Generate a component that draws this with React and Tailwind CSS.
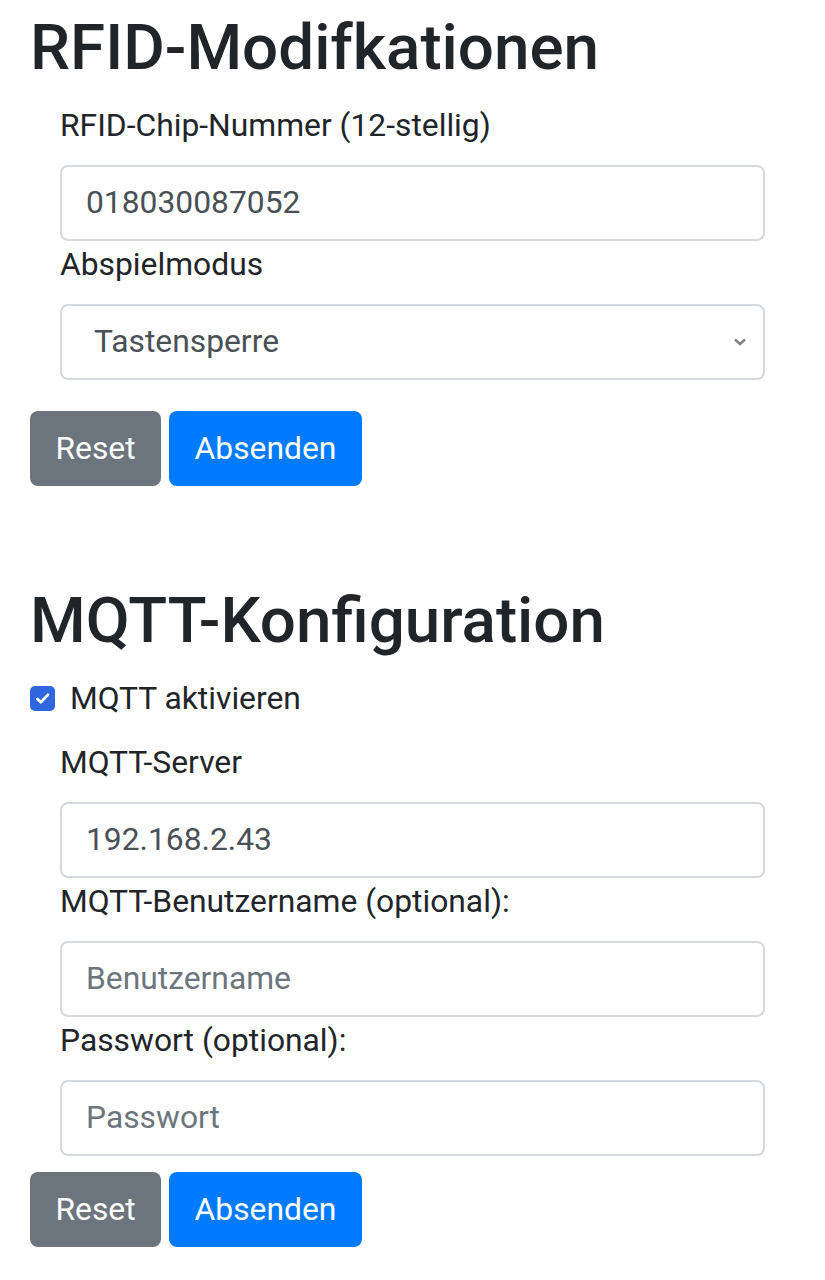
const FONT = { fontFamily: 'Roboto, "Noto Sans", sans-serif' }

function Field({ label, value, placeholder }) {
  return (
    <div>
      <label className="block h-[47px] leading-[47px] mb-[16px] text-[31.8px] text-[#212529]">{label}</label>
      <div className="h-[76px] border-2 border-[#d5d9de] rounded-[8px] bg-white px-[24px] flex items-center text-[31.8px]">
        {value ? (
          <span className="text-[#495057]">{value}</span>
        ) : (
          <span className="text-[#6c757d]">{placeholder}</span>
        )}
      </div>
    </div>
  )
}

function Buttons() {
  return (
    <div className="flex gap-[8px] text-[31.8px] text-white">
      <button className="h-[75px] w-[131px] rounded-[8px] bg-[#6c757d]">Reset</button>
      <button className="h-[75px] w-[193px] rounded-[8px] bg-[#007bff]">Absenden</button>
    </div>
  )
}

export default function App() {
  return (
    <div className="bg-white w-[825px] h-[1280px] px-[30px]" style={FONT}>
      {/* RFID */}
      <h2 className="pt-[10px] h-[86px] leading-[76px] text-[63.7px] font-medium text-[#212529]">RFID-Modifkationen</h2>
      <div className="px-[30px] pt-[16px]">
        <Field label="RFID-Chip-Nummer (12-stellig)" value="018030087052" />
        <div>
          <label className="block h-[47px] leading-[47px] mb-[16px] text-[31.8px] text-[#212529]">Abspielmodus</label>
          <div className="h-[76px] border-2 border-[#d5d9de] rounded-[8px] bg-white pl-[32px] pr-[16px] flex items-center justify-between text-[31.8px]">
            <span className="text-[#495057]">Tastensperre</span>
            <svg width="14" height="10" viewBox="0 0 14 10">
              <path d="M2 2.5 L7 7 L12 2.5" fill="none" stroke="#7d8288" strokeWidth="2.6" />
            </svg>
          </div>
        </div>
      </div>
      <div className="mt-[31px]">
        <Buttons />
      </div>

      {/* MQTT */}
      <h2 className="mt-[97px] mb-[16px] h-[76px] leading-[76px] text-[63.7px] font-medium text-[#212529]">MQTT-Konfiguration</h2>
      <div className="flex items-center h-[47px] gap-[15px] text-[31.8px] text-[#212529]">
        <span className="w-[25px] h-[25px] rounded-[5px] bg-[#2f66e0] flex items-center justify-center">
          <svg width="19" height="19" viewBox="0 0 16 16">
            <path d="M3.5 8.3 L6.6 11.2 L12.5 4.9" fill="none" stroke="white" strokeWidth="2.3" strokeLinecap="round" strokeLinejoin="round" />
          </svg>
        </span>
        <span>MQTT aktivieren</span>
      </div>
      <div className="px-[30px] pt-[17px]">
        <Field label="MQTT-Server" value="192.168.2.43" />
        <Field label="MQTT-Benutzername (optional):" placeholder="Benutzername" />
        <Field label="Passwort (optional):" placeholder="Passwort" />
      </div>
      <div className="mt-[16px]">
        <Buttons />
      </div>
    </div>
  )
}
